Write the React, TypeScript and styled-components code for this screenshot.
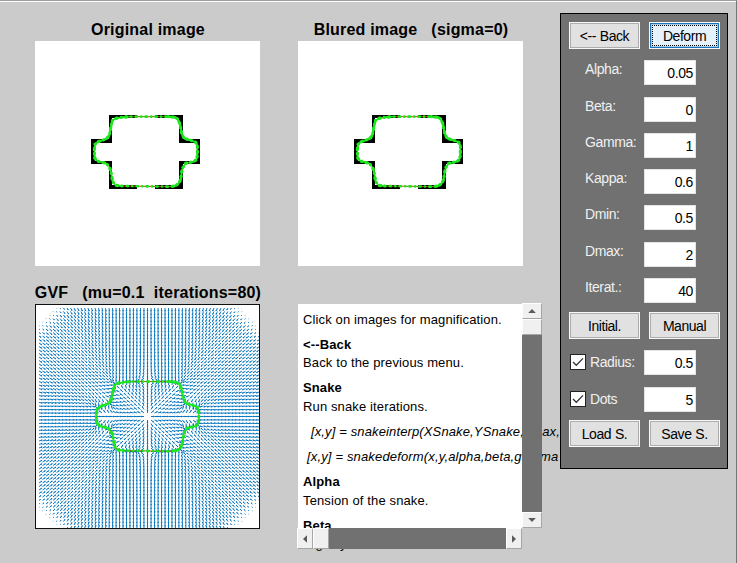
import React from "react";
import styled, { createGlobalStyle, css } from "styled-components";

const GlobalStyle = createGlobalStyle`
  * { box-sizing: border-box; }
  body { margin: 0; background: #cbcbcb; font-family: "Liberation Sans", Arial, sans-serif; color: #000; }
`;

const Window = styled.main`
  display: flex;
  width: 737px;
  height: 563px;
  overflow: hidden;
  background: #cbcbcb;
  border-top: 1px solid #a09da2;
  border-right: 1px solid #77757b;
  box-shadow: inset 0 1px #fff;
`;

const Plots = styled.div`
  display: grid;
  grid-template-columns: 225px 225px;
  grid-template-rows: 225px 245px;
  column-gap: 38px;
  row-gap: 38px;
  padding: 40px 0 0 35px;
  width: 560px;
  flex: none;
`;

const Figure = styled.figure`
  margin: 0;
  height: 225px;
  background: #fff;
`;

const Title = styled.figcaption`
  display: flex;
  justify-content: center;
  height: 20px;
  margin: -20px -10px 0;
  padding-left: 1px;
  font-size: 16px;
  line-height: 18px;
  font-weight: bold;
  white-space: pre;
  letter-spacing: 0.2px;
`;

const Canvas = styled.svg`
  display: block;
  overflow: visible;
`;

const Help = styled.section`
  display: grid;
  grid-template-columns: 224px 21px;
  grid-template-rows: 225px 20px;
  width: 245px;
  height: 245px;
`;

const HelpText = styled.div`
  height: 225px;
  padding: 7px 0 0 5px;
  background: #fff;
  white-space: nowrap;
`;

const Line = styled.p<{ $h: number; $kind?: "bold" | "code"; $indent?: number; $track?: number }>`
  margin: 0;
  height: ${(p) => p.$h}px;
  padding-left: ${(p) => p.$indent ?? 0}px;
  font-size: 13px;
  line-height: 18px;
  letter-spacing: ${(p) => p.$track ?? 0.13}px;
  font-weight: ${(p) => (p.$kind === "bold" ? "bold" : "normal")};
  font-style: ${(p) => (p.$kind === "code" ? "italic" : "normal")};
`;

const Scrollbar = styled.div<{ $vertical?: boolean }>`
  z-index: 1;
  display: flex;
  background: #717171;
  ${(p) =>
    p.$vertical
      ? css`flex-direction: column; width: 20px; height: 225px; margin-top: -1px;`
      : css`flex-direction: row; width: 225px; height: 21px; margin: -1px 0 0 -1px;`}
`;

const ScrollPart = styled.div<{ $w: number; $h: number; $end?: boolean }>`
  display: flex;
  align-items: center;
  justify-content: center;
  width: ${(p) => p.$w}px;
  height: ${(p) => p.$h}px;
  background: #f0f0f0;
  border: 1px solid;
  border-color: #fff #a5a5a5 #a5a5a5 #fff;
  ${(p) => p.$end && (p.$w > p.$h ? "margin-top: auto;" : "margin-left: auto;")}
`;

const Sidebar = styled.aside`
  z-index: 2;
  flex: none;
  width: 168px;
  height: 456px;
  margin-top: 12px;
  padding: 8px 7px 0 8px;
  background: #717171;
  border: 1px solid #000;
`;

const ButtonRow = styled.div<{ $top?: number }>`
  display: flex;
  gap: 9px;
  margin-top: ${(p) => p.$top ?? 0}px;
`;

const Button = styled.button<{ $focused?: boolean }>`
  display: flex;
  align-items: center;
  justify-content: center;
  width: 71px;
  height: 27px;
  padding: 0;
  border: 1px solid #f8f8f8;
  background: ${(p) => (p.$focused ? "#e5f1fb" : "#e1e1e1")};
  box-shadow: ${(p) =>
    p.$focused ? "inset 0 0 0 1px #1c74b8, inset 0 0 0 2px #a9cde8" : "inset 0 0 0 1px #adadad"};
  outline: ${(p) => (p.$focused ? "1px dotted #000" : "none")};
  outline-offset: -4px;
  font: 14px/16px "Liberation Sans", Arial, sans-serif;
  letter-spacing: -0.45px;
  word-spacing: 0.4px;
  color: #000;
`;

const FieldRow = styled.label<{ $top: number }>`
  display: flex;
  height: 25px;
  margin-top: ${(p) => p.$top}px;
`;

const Name = styled.span<{ $checked?: boolean }>`
  width: ${(p) => (p.$checked ? 54 : 75)}px;
  padding-left: ${(p) => (p.$checked ? 0 : 16)}px;
  padding-top: ${(p) => (p.$checked ? 4 : 1)}px;
  font-size: 14px;
  line-height: 16px;
  letter-spacing: -0.4px;
  color: #f0f0f0;
`;

const Check = styled.svg`
  width: 16px;
  height: 16px;
  margin: 4px 4px 0 1px;
  background: #fff;
  border: 1px solid #222;
`;

const Value = styled.span`
  width: 52px;
  height: 25px;
  padding: 4px 2px 0 0;
  background: #fff;
  border: 1px solid #e4e4e4;
  font-size: 14px;
  line-height: 16px;
  letter-spacing: -0.4px;
  text-align: right;
`;

type Pt = [number, number];

const GRID = 64;
const CELL = 225 / GRID;

/* Snake vertices, in 1-based pixel indices of the 64x64 source image. */
const SNAKE: Pt[] = ([
  [97, 62], [108, 55], [125, 52], [150, 50], [200, 50], [265, 50], [285, 52], [293, 57], [300, 72], [305, 100],
  [312, 115], [333, 121], [347, 127], [352, 136], [352, 165], [350, 179], [340, 185], [317, 190], [307, 205],
  [302, 238], [296, 251], [285, 258], [265, 260], [200, 259], [125, 258], [107, 256], [98, 245], [93, 215],
  [88, 200], [78, 190], [52, 183], [44, 174], [43, 150], [45, 133], [55, 125], [78, 117], [88, 107], [92, 85],
] as Pt[]).map(([x, y]) => [(45 + x / 3) / CELL + 0.5, (59 + y / 3) / CELL + 0.5]);

/* Outline cells of the cross-like figure, with openings in its top and bottom walls. */
const isWall = (c: number, r: number) => {
  const inside = (x: number, y: number) =>
    (x >= 21 && x <= 41 && y >= 21 && y <= 41) || (x >= 16 && x <= 46 && y >= 28 && y <= 34);
  if (!inside(c, r)) return false;
  if ((r === 21 || r === 41) && c >= 29 && c <= 33) return false;
  for (let dx = -1; dx <= 1; dx++) for (let dy = -1; dy <= 1; dy++) if (!inside(c + dx, r + dy)) return true;
  return false;
};

const wallPath = (() => {
  let d = "";
  for (let r = 0; r < GRID; r++)
    for (let c = 0; c < GRID; c++) if (isWall(c, r)) d += `M${c} ${r}h1v1h-1z`;
  return d;
})();

/* Gradient vector flow: diffuses the edge-map gradient, then normalises every vector. */
const quiverPath = (() => {
  const mu = 0.1;
  const N = GRID;
  const at = (a: Float64Array, c: number, r: number) =>
    a[Math.min(N - 1, Math.max(0, r)) * N + Math.min(N - 1, Math.max(0, c))];
  const f = new Float64Array(N * N);
  for (let r = 0; r < N; r++) for (let c = 0; c < N; c++) f[r * N + c] = isWall(c, r) ? 1 : 0;
  const fx = new Float64Array(N * N);
  const fy = new Float64Array(N * N);
  for (let r = 0; r < N; r++)
    for (let c = 0; c < N; c++) {
      fx[r * N + c] = (at(f, c + 1, r) - at(f, c - 1, r)) / 2;
      fy[r * N + c] = (at(f, c, r + 1) - at(f, c, r - 1)) / 2;
    }
  let u = fx.slice();
  let v = fy.slice();
  const step = (a: Float64Array, g: Float64Array) => {
    const out = new Float64Array(N * N);
    for (let r = 0; r < N; r++)
      for (let c = 0; c < N; c++) {
        const i = r * N + c;
        const lap = at(a, c + 1, r) + at(a, c - 1, r) + at(a, c, r + 1) + at(a, c, r - 1) - 4 * a[i];
        out[i] = a[i] + mu * lap - (fx[i] * fx[i] + fy[i] * fy[i]) * (a[i] - g[i]);
      }
    return out;
  };
  for (let k = 0; k < 80; k++) {
    u = step(u, fx);
    v = step(v, fy);
  }
  let d = "";
  for (let r = 0; r < N; r++)
    for (let c = 0; c < N; c++) {
      const i = r * N + c;
      const m = Math.hypot(u[i], v[i]) + 1e-10;
      const px = (u[i] / m) * 3.3;
      const py = (v[i] / m) * 3.3;
      if (Math.hypot(px, py) < 0.12) continue;
      const x = (c + 1) * 3.5 + 0.5;
      const y = (r + 1) * 3.5 + 0.5;
      const p = (a: number, b: number) => `${(x + a).toFixed(2)} ${(y + b).toFixed(2)}`;
      d += `M${p(0, 0)}L${p(px, py)}`;
      d += `M${p(px * 0.7 - py * 0.12, py * 0.7 + px * 0.12)}L${p(px, py)}L${p(px * 0.7 + py * 0.12, py * 0.7 - px * 0.12)}`;
    }
  return d;
})();

const SnakeCurve = ({ map, width }: { map: (p: Pt) => Pt; width: number }) => {
  const pts = SNAKE.map(map);
  const all = "M" + pts.map((p) => p.join(" ")).join("L") + "z";
  const isFlat = (i: number) => {
    const b = pts[(i + 1) % pts.length];
    return Math.hypot(b[0] - pts[i][0], b[1] - pts[i][1]) > 12;
  };
  /* Runs of short segments are the bends, where the dots crowd together. */
  const bends = pts
    .map((p, i) => (isFlat(i) ? `M${pts[(i + 1) % pts.length].join(" ")}` : `${i ? "" : `M${p.join(" ")}`}L${pts[(i + 1) % pts.length].join(" ")}`))
    .join("");
  return (
    <g fill="none" strokeLinecap="round" strokeLinejoin="round">
      <path d={all} stroke="#c04a10" strokeWidth={1} />
      <path d={bends} stroke="#22e022" strokeWidth={width * 0.55} strokeDasharray="7 3.5 4 3" />
      <path d={bends} stroke="#2be82b" strokeWidth={width} strokeDasharray="0.1 3.9 1.2 4.4" />
      <path d={all} stroke="#17e817" strokeWidth={2.6} strokeDasharray="0.1 4.2 1.4 4.2" />
    </g>
  );
};

const ImagePlot = () => (
  <Canvas width="225" height="225" viewBox="0 0 225 225">
    <path d={wallPath} transform={`scale(${CELL})`} shapeRendering="crispEdges" />
    <SnakeCurve width={3.2} map={([x, y]) => [(x - 0.5) * CELL, (y - 0.5) * CELL]} />
  </Canvas>
);

const GvfPlot = () => (
  <Canvas width="225" height="225" viewBox="0 0 225 225">
    <path d={quiverPath} fill="none" stroke="#0072bd" strokeWidth={0.95} />
    <SnakeCurve width={3} map={([x, y]) => [x * 3.5 + 0.5, y * 3.5 + 0.5]} />
    <rect x="0.5" y="0.5" width="224" height="224" fill="none" stroke="#111" />
  </Canvas>
);

const Arrow = ({ turn }: { turn: number }) => (
  <svg width="8" height="8" viewBox="0 0 8 8">
    <path d="M0.2 6L4 2L7.8 6z" fill="#5a5a5a" transform={`rotate(${turn} 4 4)`} />
  </svg>
);

const FIELDS: { name: string; value: string; top: number }[] = [
  { name: "Alpha:", value: "0.05", top: 11 },
  { name: "Beta:", value: "0", top: 12 },
  { name: "Gamma:", value: "1", top: 11 },
  { name: "Kappa:", value: "0.6", top: 11 },
  { name: "Dmin:", value: "0.5", top: 11 },
  { name: "Dmax:", value: "2", top: 12 },
  { name: "Iterat.:", value: "40", top: 11 },
];

const CheckField = ({ name, value, top }: { name: string; value: string; top: number }) => (
  <FieldRow $top={top}>
    <Check viewBox="0 0 14 14">
      <path d="M2 7L5.3 10.3L12 3.4" fill="none" stroke="#333" strokeWidth="1.3" />
    </Check>
    <Name $checked>{name}</Name>
    <Value>{value}</Value>
  </FieldRow>
);

export default function App() {
  return (
    <>
      <GlobalStyle />
      <Window>
        <Plots>
          <Figure>
            <Title>Original image</Title>
            <ImagePlot />
          </Figure>
          <Figure>
            <Title>Blured image   (sigma=0)</Title>
            <ImagePlot />
          </Figure>
          <Figure>
            <Title>GVF   (mu=0.1  iterations=80)</Title>
            <GvfPlot />
          </Figure>
          <Help>
            <HelpText>
              <Line $h={25}>Click on images for magnification.</Line>
              <Line $h={18} $kind="bold">&lt;--Back</Line>
              <Line $h={25}>Back to the previous menu.</Line>
              <Line $h={19} $kind="bold">Snake</Line>
              <Line $h={25}>Run snake iterations.</Line>
              <Line $h={25} $kind="code" $indent={8}>[x,y] = snakeinterp(XSnake,YSnake,dmax,</Line>
              <Line $h={25} $kind="code" $indent={4} $track={0.16}>[x,y] = snakedeform(x,y,alpha,beta,gamma</Line>
              <Line $h={19} $kind="bold">Alpha</Line>
              <Line $h={25}>Tension of the snake.</Line>
              <Line $h={18} $kind="bold">Beta</Line>
              <Line $h={18}>Rigidity</Line>
            </HelpText>
            <Scrollbar $vertical>
              <ScrollPart $w={20} $h={16}><Arrow turn={0} /></ScrollPart>
              <ScrollPart $w={20} $h={16} />
              <ScrollPart $w={20} $h={16} $end><Arrow turn={180} /></ScrollPart>
            </Scrollbar>
            <Scrollbar>
              <ScrollPart $w={16} $h={21}><Arrow turn={-90} /></ScrollPart>
              <ScrollPart $w={16} $h={21} />
              <ScrollPart $w={16} $h={21} $end><Arrow turn={90} /></ScrollPart>
            </Scrollbar>
          </Help>
        </Plots>
        <Sidebar>
          <ButtonRow>
            <Button>&lt;-- Back</Button>
            <Button $focused>Deform</Button>
          </ButtonRow>
          {FIELDS.map((f) => (
            <FieldRow key={f.name} $top={f.top}>
              <Name>{f.name}</Name>
              <Value>{f.value}</Value>
            </FieldRow>
          ))}
          <ButtonRow $top={9}>
            <Button>Initial.</Button>
            <Button>Manual</Button>
          </ButtonRow>
          <CheckField name="Radius:" value="0.5" top={11} />
          <CheckField name="Dots" value="5" top={12} />
          <ButtonRow $top={8}>
            <Button>Load S.</Button>
            <Button>Save S.</Button>
          </ButtonRow>
        </Sidebar>
      </Window>
    </>
  );
}
